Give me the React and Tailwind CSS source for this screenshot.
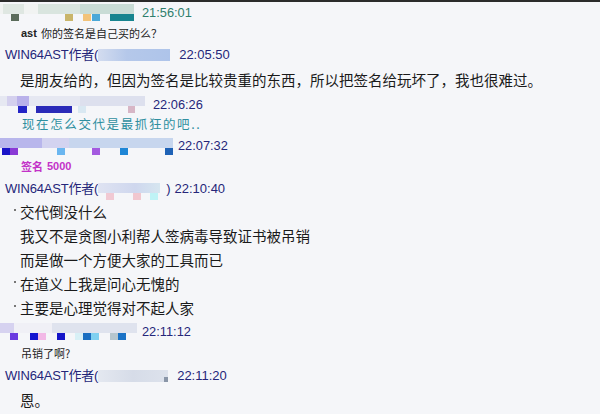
const sans = { fontFamily: '"Liberation Sans", "Noto Sans CJK SC", sans-serif' };

// pixelated blur over names: a light band on top, small coloured squares below
function Mosaic({ width, top, blocks, height = 17 }) {
    return (
        <div className="relative shrink-0" style={{ width, height }}>
            <div className="absolute left-0 right-0 top-0 h-[10px]" style={{ background: top }} />
            {blocks.map((b, i) => (
                <div
                    key={i}
                    className="absolute top-[10px] h-[7px]"
                    style={{ left: b[0], width: b[1], background: b[2] }}
                />
            ))}
        </div>
    );
}

function Head({ mosaic, time, color = 'text-[#25267a]', gap = 'ml-[8px]' }) {
    return (
        <div className="flex items-center h-full">
            {mosaic}
            <span className={`${gap} text-[12.8px] ${color}`} style={sans}>{time}</span>
        </div>
    );
}

function Author({ blur, time, close }) {
    return (
        <div className="flex items-center h-full pl-[5px] text-[13px] text-[#25267a]" style={sans}>
            <span className="tracking-[-0.2px]">WIN64AST作者(</span>
            {blur}
            {close ? <span className="ml-[6px]">)</span> : null}
            <span className={close ? 'ml-[4px]' : 'ml-[9px]'}>{time}</span>
        </div>
    );
}

function Line({ children, bullet }) {
    return (
        <div className="relative flex items-center h-full pl-[20px] text-[14.5px] text-[#1a1a1a]" style={{ fontFamily: '"Noto Sans CJK SC", sans-serif' }}>
            {bullet ? <span className="absolute left-[14px] top-[9px] w-[2px] h-[2px] bg-[#777]" /> : null}
            {children}
        </div>
    );
}

export default function App() {
    return (
        <div className="w-[600px] h-[414px] overflow-hidden bg-[#f5f6f9] flex flex-col">
            <div className="h-[2px] bg-[#2b2b2b] shrink-0" />

            <div className="h-[20px] pt-[1px]">
                <Head
                    time="21:56:01"
                    color="text-[#2e7e6c]"
                    mosaic={
                        <Mosaic
                            width={134}
                            top="linear-gradient(90deg,#f1f3f2 0 2%,#dfe7e2 2% 18%,#f1f3f2 18% 28%,#d9e5df 28% 60%,#c9dcd6 60% 100%)"
                            blocks={[[11, 8, '#5a6b5a'], [65, 8, '#c9b56a'], [83, 8, '#f2c37a'], [92, 8, '#4aa8d8'], [110, 24, '#17848f']]}
                        />
                    }
                />
            </div>

            <div className="h-[22px] flex items-center pl-[21px] text-[11px] text-[#222]" style={sans}>
                <span className="font-bold mr-[4px]">ast</span>
                <span style={{ fontFamily: '"Noto Sans CJK SC", sans-serif' }}>你的签名是自己买的么？</span>
            </div>

            <div className="h-[22px]">
                <Author
                    time="22:05:50"
                    blur={<div className="w-[72px] h-[12px] bg-[linear-gradient(90deg,#d3dcef,#b5c8ea_40%,#aec4ea)]" />}
                />
            </div>

            <div className="h-[28px]">
                <Line>是朋友给的，但因为签名是比较贵重的东西，所以把签名给玩坏了，我也很难过。</Line>
            </div>

            <div className="h-[20px] pt-[1px]">
                <Head
                    time="22:06:26"
                    mosaic={
                        <Mosaic
                            width={145}
                            top="linear-gradient(90deg,#e6e8f2 0 5%,#d4d0ee 5% 12%,#b9b1ea 12% 20%,#e6e8f2 20% 55%,#dde0ee 55% 100%)"
                            blocks={[[18, 9, '#2424c6'], [36, 36, '#2a2ab8'], [78, 8, '#d9e8f2'], [128, 7, '#d7b6c6']]}
                        />
                    }
                />
            </div>

            <div className="h-[21px] flex items-center pl-[22px] text-[12.5px] text-[#2f8fa0] tracking-[1.6px]" style={{ fontFamily: '"Noto Sans CJK SC", sans-serif' }}>
                现在怎么交代是最抓狂的吧..
            </div>

            <div className="h-[21px] pt-[1px]">
                <Head
                    time="22:07:32"
                    gap="ml-[5px]"
                    mosaic={
                        <Mosaic
                            width={173}
                            top="linear-gradient(90deg,#b8b6ec 0 24%,#d3d3f0 24% 40%,#c7d6ee 40% 100%)"
                            blocks={[[2, 8, '#1a14c8'], [10, 8, '#8a3ad6'], [57, 8, '#6ab6f0'], [92, 8, '#a45ae0'], [120, 8, '#1e86d6'], [165, 8, '#1e62b6']]}
                        />
                    }
                />
            </div>

            <div className="h-[21px] flex items-center pl-[21px] text-[11px] font-bold text-[#c332c8]" style={sans}>
                <span style={{ fontFamily: '"Noto Sans CJK SC", sans-serif' }}>签名</span>
                <span className="ml-[4px]">5000</span>
            </div>

            <div className="h-[23px]">
                <Author
                    time="22:10:40"
                    close
                    blur={
                        <Mosaic
                            width={62}
                            height={12}
                            top="linear-gradient(90deg,#dfe3f2,#cfd7ee 60%,#d6e6f0)"
                            blocks={[[8, 8, '#f1c9d3'], [35, 8, '#f1c7cf'], [52, 8, '#bff3f6']]}
                        />
                    }
                />
            </div>

            <div className="h-[24px]"><Line bullet>交代倒没什么</Line></div>
            <div className="h-[24px]"><Line>我又不是贪图小利帮人签病毒导致证书被吊销</Line></div>
            <div className="h-[24px]"><Line>而是做一个方便大家的工具而已</Line></div>
            <div className="h-[24px]"><Line bullet>在道义上我是问心无愧的</Line></div>
            <div className="h-[24px]"><Line bullet>主要是心理觉得对不起人家</Line></div>

            <div className="h-[22px] pt-[1px]">
                <Head
                    time="22:11:12"
                    gap="ml-[5px]"
                    mosaic={
                        <Mosaic
                            width={137}
                            top="linear-gradient(90deg,#d6d2f0 0 10%,#f0f0f6 10% 38%,#dfe3ee 38% 100%)"
                            blocks={[[10, 8, '#6a3ae0'], [30, 8, '#1414d0'], [38, 8, '#f2b8e6'], [57, 8, '#1414c8'], [75, 8, '#d8f0f6'], [83, 8, '#1a6ec0'], [91, 8, '#7fd0f0'], [110, 8, '#b6c6ce'], [118, 8, '#1a72c6']]}
                        />
                    }
                />
            </div>

            <div className="h-[22px] flex items-center pl-[21px] text-[11px] text-[#222]" style={{ fontFamily: '"Noto Sans CJK SC", sans-serif' }}>
                吊销了啊?
            </div>

            <div className="h-[24px]">
                <Author
                    time="22:11:20"
                    blur={
                        <div className="relative w-[70px] h-[12px] bg-[linear-gradient(90deg,#e4e8f0,#d6dce8_50%,#dde2ec)]">
                            <div className="absolute right-0 bottom-0 w-[4px] h-[5px] bg-[#8a96a8]" />
                        </div>
                    }
                />
            </div>

            <div className="h-[24px]"><Line>恩。</Line></div>
        </div>
    );
}
